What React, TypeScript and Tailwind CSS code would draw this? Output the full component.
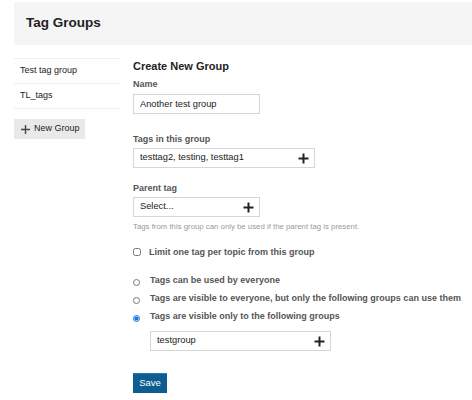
import { useState } from 'react'

function PlusIcon() {
  return (
    <svg width="11" height="11" viewBox="0 0 11 11" className="shrink-0">
      <path d="M5.5 0.5v10M0.5 5.5h10" stroke="#222" strokeWidth="2" />
    </svg>
  )
}

function TagInput({ value, width }: { value: string; width: string }) {
  return (
    <div className={`flex h-[20px] items-center justify-between border border-[#d6d6d6] bg-white pl-[6px] pr-[5px] text-[9.3px] text-[#222] ${width}`}>
      <span>{value}</span>
      <PlusIcon />
    </div>
  )
}

export default function App() {
  const [mode, setMode] = useState(2)
  const [limitOne, setLimitOne] = useState(false)

  const options = [
    'Tags can be used by everyone',
    'Tags are visible to everyone, but only the following groups can use them',
    'Tags are visible only to the following groups'
  ]

  return (
    <div className="h-[400px] w-[472px] overflow-hidden bg-white font-['Liberation_Sans',Arial,sans-serif]">
      {/* Header */}
      <div className="ml-[14px] mt-[2px] flex h-[43px] items-center bg-[#f5f5f5] pl-[12px]">
        <h1 className="text-[13.5px] font-bold text-[#222]">Tag Groups</h1>
      </div>

      <div className="mt-[13px] flex">
        {/* Sidebar */}
        <div className="ml-[14px] w-[106px] shrink-0">
          <ul className="border-t border-[#eee]">
            <li className="flex h-[25px] items-center border-b border-[#eee] pl-[6px] text-[9px] text-[#222]">Test tag group</li>
            <li className="flex h-[25px] items-center border-b border-[#eee] pl-[6px] text-[9px] text-[#222]">TL_tags</li>
          </ul>
          <button className="mt-[10px] flex h-[20px] items-center gap-[4px] bg-[#e9e9e9] pl-[7px] pr-[5px] text-[9px] text-[#222]">
            <svg width="9" height="9" viewBox="0 0 9 9">
              <path d="M4.5 0v9M0 4.5h9" stroke="#444" strokeWidth="1.4" />
            </svg>
            New Group
          </button>
        </div>

        {/* Form */}
        <div className="ml-[13px] flex-1">
          <h2 className="mt-[1px] text-[11px] leading-[14px] font-bold text-[#222]">Create New Group</h2>

          <label className="mt-[5px] block text-[9px] leading-[12px] font-bold text-[#555]">Name</label>
          <input
            defaultValue="Another test group"
            className="mt-[4px] block h-[20px] w-[127px] border border-[#d6d6d6] px-[6px] text-[9.3px] text-[#222] outline-none"
          />

          <label className="mt-[19px] block text-[9px] leading-[12px] font-bold text-[#555]">Tags in this group</label>
          <div className="mt-[3px]">
            <TagInput value="testtag2, testing, testtag1" width="w-[182px]" />
          </div>

          <label className="mt-[14px] block text-[9px] leading-[12px] font-bold text-[#555]">Parent tag</label>
          <div className="mt-[3px]">
            <TagInput value="Select..." width="w-[127px]" />
          </div>
          <p className="mt-[5px] whitespace-nowrap text-[7.8px] leading-[10px] text-[#999]">
            Tags from this group can only be used if the parent tag is present.
          </p>

          <label className="mt-[14px] flex items-center gap-[8px] whitespace-nowrap text-[9px] leading-[12px] font-bold text-[#555]">
            <input
              type="checkbox"
              checked={limitOne}
              onChange={() => setLimitOne(!limitOne)}
              className="m-0 h-[8px] w-[8px]"
            />
            Limit one tag per topic from this group
          </label>

          <div className="mt-[16px] flex flex-col gap-[6px]">
            {options.map((text, i) => (
              <label key={text} className="flex items-start gap-[10px] whitespace-nowrap text-[9px] leading-[12px] font-bold text-[#555]">
                <input
                  type="radio"
                  name="visibility"
                  checked={mode === i}
                  onChange={() => setMode(i)}
                  className="m-0 mt-[5px] h-[7px] w-[7px] accent-[#1a73e8]"
                />
                {text}
              </label>
            ))}
          </div>

          <div className="ml-[17px] mt-[9px]">
            <TagInput value="testgroup" width="w-[181px]" />
          </div>

          <button className="mt-[22px] h-[20px] w-[34px] border-t border-[#2a7bab] bg-[#0b5e8f] text-[9.5px] text-white">
            Save
          </button>
        </div>
      </div>
    </div>
  )
}
